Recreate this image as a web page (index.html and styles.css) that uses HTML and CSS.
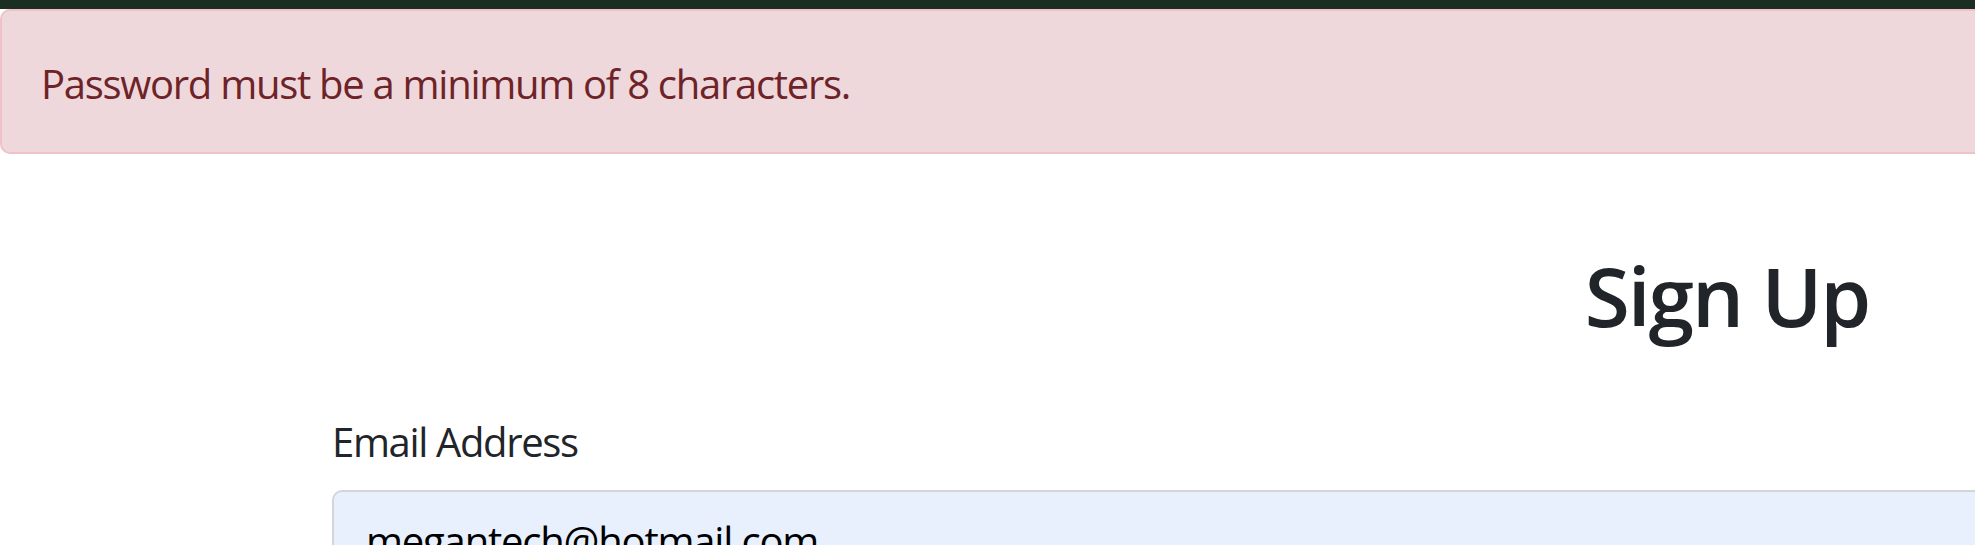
FILE: index.html
```html
<!DOCTYPE html>
<html lang="en">
<head>
<meta charset="utf-8">
<title>Sign Up</title>
<link rel="stylesheet" href="styles.css">
</head>
<body>
<div class="topbar"></div>
<div class="alert">Password must be a minimum of 8 characters.</div>
<main class="container">
  <h1 class="title">Sign Up</h1>
  <form class="form">
    <label class="label" for="email">Email Address</label>
    <input class="input" id="email" type="email" value="megantech@hotmail.com">
  </form>
</main>
</body>
</html>
```
FILE: styles.css
```css
html, body {
  margin: 0;
  padding: 0;
  overflow: hidden;
  background: #ffffff;
  font-family: "Open Sans", "Noto Sans", sans-serif;
  color: #212529;
}
.topbar {
  height: 9px;
  background: #1b2e22;
}
.alert {
  box-sizing: border-box;
  height: 145px;
  width: calc(100% + 40px);
  padding: 43px 40px 0 39px;
  background: #efd8db;
  color: #6e2328;
  border: 2px solid #eec2c7;
  border-radius: 10px;
  font-size: 40px;
  line-height: 60px;
  letter-spacing: -1.28px;
}
.container {
  margin-left: 332px;
  width: 2790px;
}
.title {
  margin: 91px 0 0;
  text-align: center;
  font-size: 82px;
  font-weight: 600;
  line-height: 100px;
  letter-spacing: -2px;
  color: #212529;
}
.form {
  display: flex;
  flex-direction: column;
  margin-top: 67px;
}
.label {
  font-size: 40px;
  line-height: 60px;
  margin-bottom: 18px;
  letter-spacing: -1.35px;
}
.input {
  box-sizing: border-box;
  height: 100px;
  padding: 15px 35px 15px 32px;
  font-family: inherit;
  font-size: 40px;
  letter-spacing: -1.2px;
  color: #000;
  background: #e8f0fe;
  border: 2px solid #d2d6db;
  border-radius: 10px;
}
```
